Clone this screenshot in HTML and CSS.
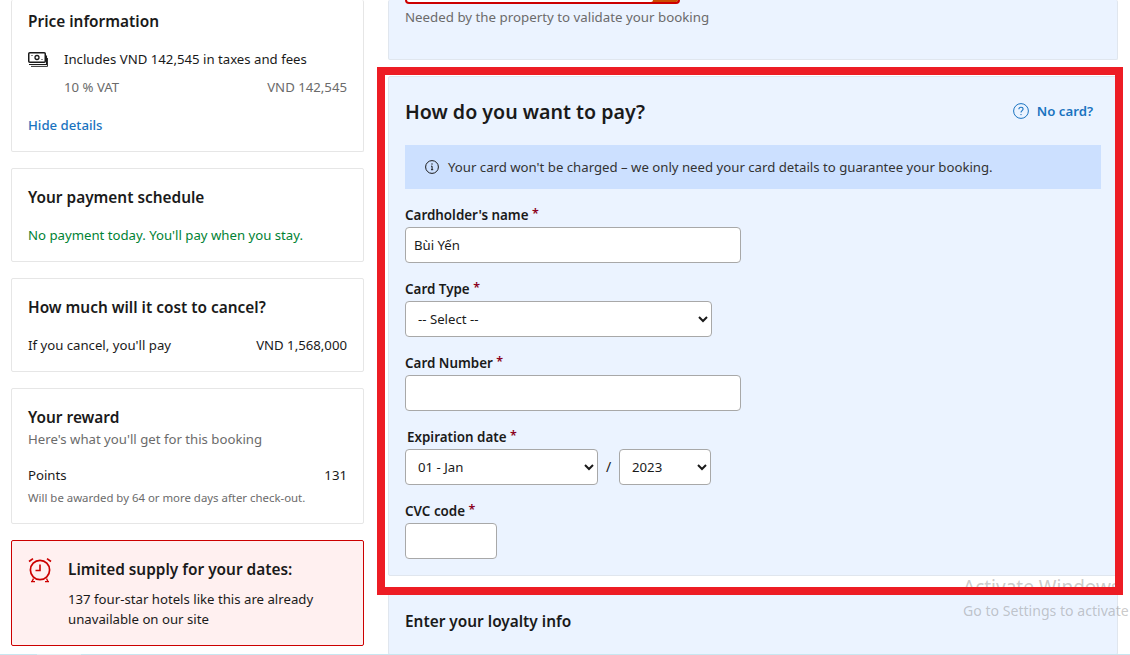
FILE: index.html
```html
<!DOCTYPE html>
<html lang="en">
<head>
    <meta charset="UTF-8">
    <meta name="viewport" content="width=device-width, initial-scale=1.0">
    <title>Booking - Payment details</title>
    <link rel="stylesheet" href="styles.css">
</head>
<body>
    <div class="page">
        <div class="side">
            <div class="card card-price">
                <h3 class="price-title">Price information</h3>
                <div class="tax-row">
                    <svg class="money-icon" width="20" height="15" viewBox="0 0 20 15" fill="none" stroke="#1a1a1a">
                        <rect x="0.75" y="0.75" width="16.5" height="9.5" rx="1" stroke-width="1.5"/>
                        <circle cx="9" cy="5.5" r="2" stroke-width="1.3"/>
                        <path d="M3.5 3.5h1M13.5 7.5h1" stroke-width="1.2"/>
                        <path d="M1 12.5h17.5V3.5" stroke-width="1.1"/>
                        <path d="M3 14.4h16.5V6" stroke-width="0.9"/>
                    </svg>
                    <span>Includes VND 142,545 in taxes and fees</span>
                </div>
                <div class="row muted vat-row">
                    <span>10 % VAT</span>
                    <span>VND 142,545</span>
                </div>
                <a class="link link-strong" href="#">Hide details</a>
            </div>

            <div class="card card-schedule">
                <h3>Your payment schedule</h3>
                <p class="green">No payment today. You'll pay when you stay.</p>
            </div>

            <div class="card card-schedule">
                <h3>How much will it cost to cancel?</h3>
                <div class="row">
                    <span>If you cancel, you'll pay</span>
                    <span>VND 1,568,000</span>
                </div>
            </div>

            <div class="card card-reward">
                <h3>Your reward</h3>
                <p class="muted">Here's what you'll get for this booking</p>
                <div class="row points-row">
                    <span>Points</span>
                    <span>131</span>
                </div>
                <p class="muted small">Will be awarded by 64 or more days after check-out.</p>
            </div>

            <div class="card card-alert">
                <svg class="clock-icon" width="24" height="26" viewBox="0 0 24 26" fill="none" stroke="#cc0000">
                    <circle cx="12" cy="13" r="9.6" stroke-width="1.7"/>
                    <path d="M12 7.5v6H7.5" stroke-width="1.6"/>
                    <path d="M1 4.5 5 1.6M23 4.5 19 1.6" stroke-width="1.7"/>
                    <path d="M5.5 21.5 3.8 25M18.5 21.5 20.2 25M3 24.6h4M17 24.6h4" stroke-width="1.4"/>
                </svg>
                <div>
                    <h3 class="alert-title">Limited supply for your dates:</h3>
                    <p class="alert-text">137 four-star hotels like this are already<br>unavailable on our site</p>
                </div>
            </div>
        </div>

        <div class="main">
            <div class="panel panel-top">
                <div class="cut-input"></div>
                <p class="muted">Needed by the property to validate your booking</p>
            </div>

            <div class="panel panel-pay">
                <div class="pay-head">
                    <h2>How do you want to pay?</h2>
                    <a class="link no-card" href="#">
                        <svg width="16" height="16" viewBox="0 0 16 16" fill="none" stroke="#1a73c0">
                            <circle cx="8" cy="8" r="7.4" stroke-width="1"/>
                            <path d="M5.9 6.2c0-1.2 1-2 2.1-2s2.1.8 2.1 1.9c0 1.5-2.1 1.6-2.1 3.3" stroke-width="1.1"/>
                            <circle cx="8" cy="11.6" r="0.7" fill="#1a73c0" stroke="none"/>
                        </svg>
                        No card?
                    </a>
                </div>
                <div class="notice">
                    <svg width="14" height="14" viewBox="0 0 14 14" fill="none" stroke="#1a1a1a">
                        <circle cx="7" cy="7" r="6.4" stroke-width="1"/>
                        <path d="M6 6.2h1.1v3.4M6 9.7h2.2" stroke-width="1"/>
                        <circle cx="7" cy="4" r="0.7" fill="#1a1a1a" stroke="none"/>
                    </svg>
                    <span>Your card won't be charged – we only need your card details to guarantee your booking.</span>
                </div>

                <div class="field">
                    <label>Cardholder's name <i>*</i></label>
                    <input class="input-wide" type="text" value="Bùi Yến">
                </div>
                <div class="field">
                    <label>Card Type <i>*</i></label>
                    <select class="select-type"><option>-- Select --</option></select>
                </div>
                <div class="field">
                    <label>Card Number <i>*</i></label>
                    <input class="input-wide" type="text">
                </div>
                <div class="field">
                    <label class="label-date">Expiration date <i>*</i></label>
                    <div class="date-row">
                        <select class="select-month"><option>01 - Jan</option></select>
                        <span class="slash">/</span>
                        <select class="select-year"><option>2023</option></select>
                    </div>
                </div>
                <div class="field">
                    <label>CVC code <i>*</i></label>
                    <input class="input-cvc" type="text">
                </div>
            </div>

            <div class="panel panel-loyalty">
                <h3>Enter your loyalty info</h3>
            </div>
        </div>
    </div>

    <!-- screenshot overlays -->
    <div class="watermark">
        <div class="wm-big">Activate Windows</div>
        <div class="wm-small">Go to Settings to activate</div>
    </div>
    <div class="red-box"></div>
    <div class="bottom-line"></div>
</body>
</html>
```

FILE: styles.css
```css
* {
    box-sizing: border-box;
}
html, body {
    height: 100%;
}
body {
    margin: 0;
    background: white;
    color: #1a1a1a;
    font-family: "Noto Sans", sans-serif;
    font-size: 13.2px;
    line-height: 20px;
    overflow: hidden;
    position: relative;
}
h2, h3, p {
    margin: 0;
}
h2 {
    font-size: 19.6px;
    line-height: 26px;
    font-weight: 600;
}
h3 {
    font-size: 15.4px;
    line-height: 20px;
    font-weight: 600;
    padding-top: 1px;
    margin-bottom: -1px;
}
a {
    text-decoration: none;
}
.page {
    display: flex;
    gap: 24px;
    padding-left: 11px;
    height: 655px;
}
.side {
    width: 353px;
    display: flex;
    flex-direction: column;
    gap: 16px;
}
.main {
    width: 730px;
    display: flex;
    flex-direction: column;
    gap: 16px;
}
.card {
    flex: none;
    background: white;
    border: 1px solid #e6e6e6;
    border-radius: 2px;
    padding: 0 16px;
}
.row {
    display: flex;
    justify-content: space-between;
}
.muted {
    color: #6b6b6b;
}
.small {
    font-size: 11.4px;
    line-height: 16px;
}
.green {
    color: #008234;
    margin-top: 18px;
}
.link {
    color: #1a73c0;
}
.link-strong {
    font-weight: 500;
}

.card-price {
    height: 152px;
    border-top: none;
    padding-top: 11px;
}
.tax-row {
    display: flex;
    align-items: center;
    gap: 16px;
    margin-top: 18px;
}
.money-icon {
    flex: none;
}
.vat-row {
    margin: 8px 0 18px 36px;
}
.card-schedule {
    height: 94px;
    padding-top: 18px;
}
.card-schedule .row {
    margin-top: 18px;
}
.card-reward {
    height: 136px;
    padding-top: 18px;
}
.card-reward h3 + .muted {
    margin-top: 2px;
}
.points-row {
    margin-top: 16px;
}
.card-reward .small {
    margin-top: 5px;
}
.card-alert {
    height: 106px;
    background: #fff0f0;
    border-color: #cc0000;
    display: flex;
    gap: 16px;
    padding-top: 16px;
}
.clock-icon {
    flex: none;
}
.alert-title {
    margin-top: 2px;
}
.alert-text {
    margin-top: 10px;
}

.panel {
    flex: none;
    background: #ebf3ff;
    border: 1px solid #e0e6ee;
    border-radius: 2px;
    padding: 0 16px;
}
.panel-top {
    height: 60px;
    border-top: none;
}
.cut-input {
    width: 275px;
    height: 4px;
    background: white;
    border: 2px solid #cc0000;
    border-top: none;
    border-radius: 0 0 4px 4px;
    box-shadow: inset -25px 0 0 #cc4b00;
}
.panel-top .muted {
    margin-top: 3px;
    font-size: 13.3px;
}
.panel-pay {
    height: 500px;
    padding-top: 22px;
}
.pay-head {
    display: flex;
    justify-content: space-between;
    align-items: center;
    padding-right: 8px;
}
.no-card {
    display: flex;
    align-items: center;
    gap: 8px;
    font-weight: 600;
    margin-bottom: 2px;
}
.notice {
    display: flex;
    align-items: center;
    gap: 9px;
    height: 44px;
    margin: 20px 0 16px;
    padding-left: 20px;
    background: #cce0ff;
    width: 696px;
}
.notice span {
    color: #333;
}
.field {
    margin-bottom: 16px;
}
.field label {
    display: block;
    font-weight: 600;
    line-height: 20px;
    font-size: 13.4px;
    margin-bottom: 2px;
}
.field i {
    color: #8b0020;
    font-style: normal;
    font-size: 12.5px;
    line-height: 1;
    vertical-align: 2px;
}
.label-date {
    padding-left: 2px;
}
input, select {
    display: block;
    height: 36px;
    background: white;
    border: 1px solid #a8a8a8;
    border-radius: 4px;
    font-family: "Noto Sans", sans-serif;
    font-size: 13.2px;
    color: #1a1a1a;
}
input {
    padding: 0 8px;
}
select {
    padding: 0 8px;
}
.input-wide {
    width: 336px;
}
.select-type {
    width: 307px;
}
.input-cvc {
    width: 92px;
}
.date-row {
    display: flex;
    align-items: center;
}
.select-month {
    width: 193px;
}
.slash {
    width: 21px;
    text-align: center;
    font-size: 14px;
}
.select-year {
    width: 92px;
}
.panel-loyalty {
    height: 63px;
    padding-top: 18px;
}

.red-box {
    position: absolute;
    left: 377px;
    top: 67px;
    width: 746px;
    height: 528px;
    border: 8px solid #ed1c24;
}
.watermark {
    position: absolute;
    left: 963px;
    top: 575px;
    white-space: nowrap;
    color: rgba(120, 120, 120, 0.4);
}
.wm-big {
    font-size: 19px;
    line-height: 24px;
}
.wm-small {
    font-size: 14.1px;
    line-height: 24px;
}
.bottom-line {
    position: absolute;
    left: 0;
    right: 0;
    bottom: 0;
    height: 1px;
    background: linear-gradient(to right, #c8e6f0 37px, #e0f0f5 37px, #e0f0f5 81px, #c8e6f0 81px);
}
```
